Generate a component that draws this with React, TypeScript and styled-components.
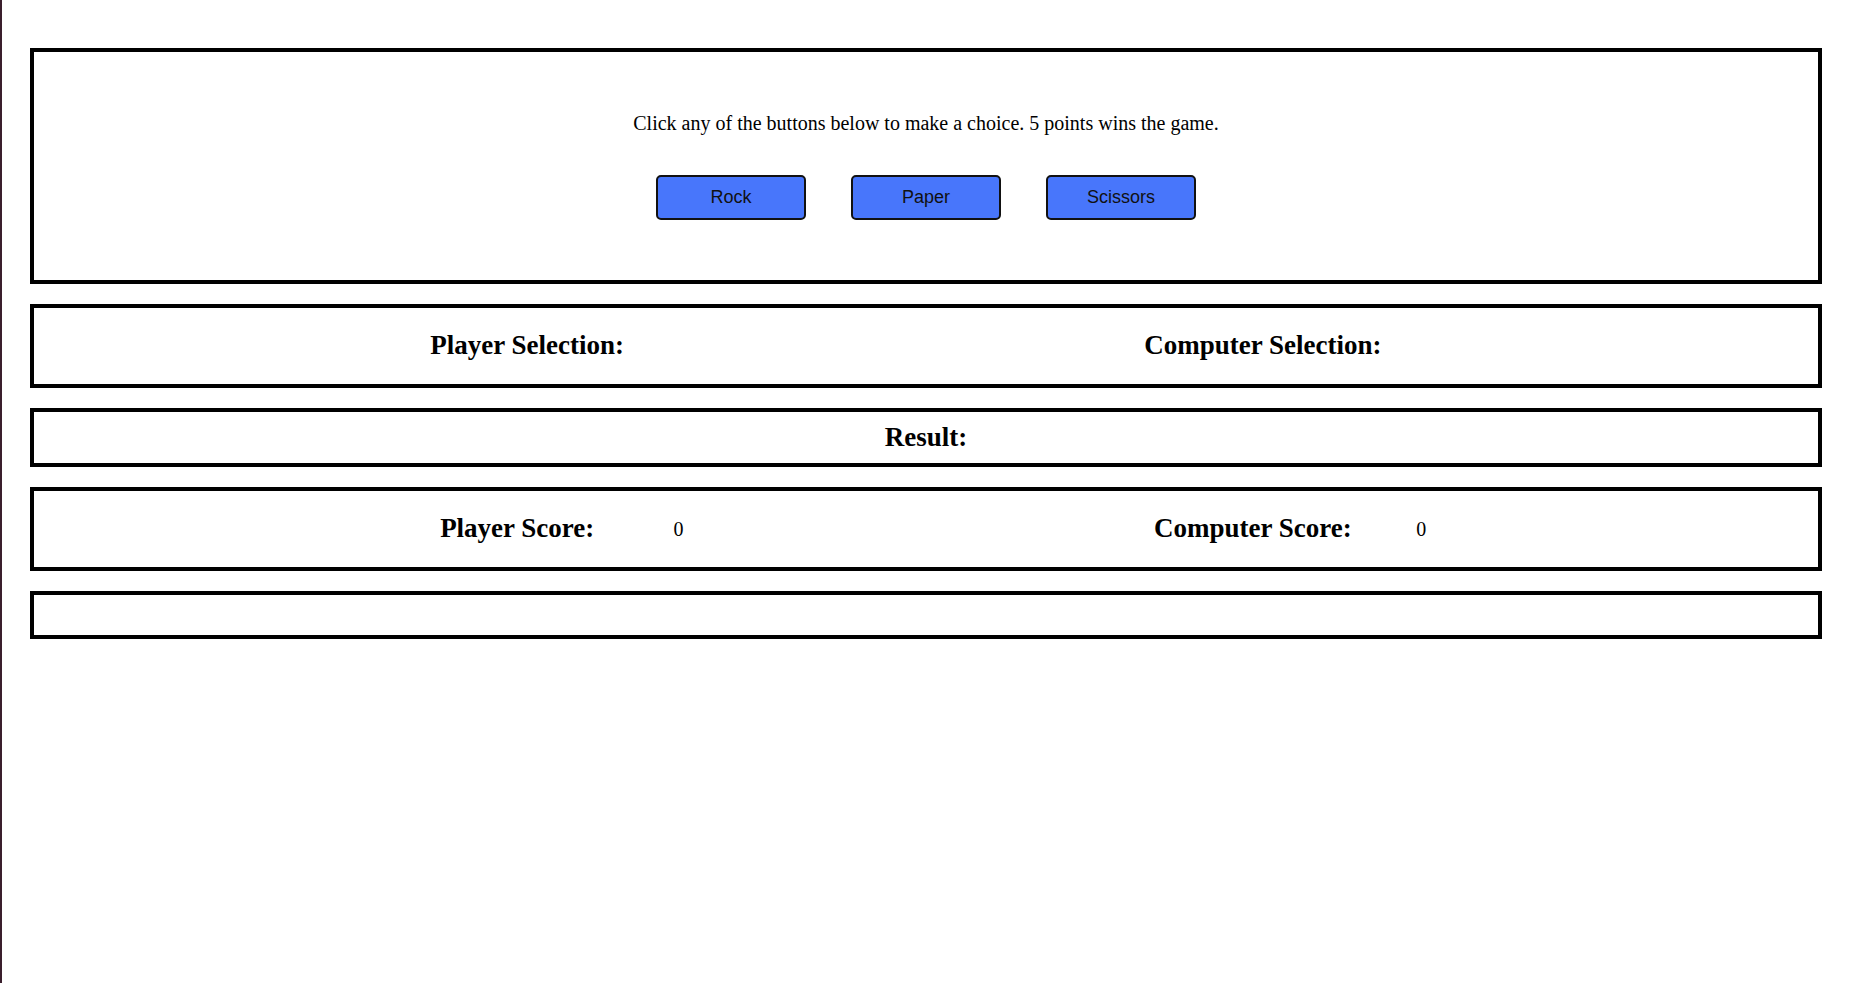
import styled, { createGlobalStyle } from "styled-components";
import { useState } from "react";

type Choice = "Rock" | "Paper" | "Scissors";

const choices: Choice[] = ["Rock", "Paper", "Scissors"];

const GlobalStyle = createGlobalStyle`
  html {
    min-height: 100%;
    border-left: 2px solid #3a1f2d;
    background: #ffffff;
  }
  body {
    margin: 0;
    font-family: "Liberation Serif", "Times New Roman", serif;
    color: #000;
  }
  * {
    box-sizing: border-box;
  }
`;

export default function App() {
  const [playerScore] = useState(0);
  const [computerScore] = useState(0);

  return (
    <>
      <GlobalStyle />
      <Page>
        <Intro>
          <Lead>
            Click any of the buttons below to make a choice. 5 points wins the
            game.
          </Lead>
          <Buttons>
            {choices.map((c) => (
              <ChoiceButton key={c}>{c}</ChoiceButton>
            ))}
          </Buttons>
        </Intro>

        <Panel $height={84}>
          <Row>
            <Group>
              <Label>Player Selection:</Label>
              <Value></Value>
            </Group>
            <Group>
              <Label>Computer Selection:</Label>
              <Value></Value>
            </Group>
          </Row>
        </Panel>

        <Panel $height={59}>
          <Label>Result:</Label>
        </Panel>

        <Panel $height={84}>
          <Row>
            <Group>
              <Label>Player Score:</Label>
              <Value>{playerScore}</Value>
            </Group>
            <Group>
              <Label>Computer Score:</Label>
              <Value>{computerScore}</Value>
            </Group>
          </Row>
        </Panel>

        <Panel $height={48} />
      </Page>
    </>
  );
}

const Page = styled.main`
  display: flex;
  flex-direction: column;
  gap: 20px;
  padding: 48px 28px;
`;

const Panel = styled.section<{ $height: number }>`
  height: ${(p) => p.$height}px;
  border: 4px solid #000;
  display: flex;
  align-items: center;
  justify-content: center;
`;

const Intro = styled(Panel).attrs({ $height: 236 })`
  flex-direction: column;
  justify-content: flex-start;
  padding-top: 60px;
`;

const Lead = styled.p`
  margin: 0;
  font-size: 20px;
  line-height: 23px;
`;

const Buttons = styled.div`
  display: flex;
  gap: 45px;
  margin-top: 40px;
`;

const ChoiceButton = styled.button`
  width: 150px;
  height: 45px;
  background-color: #4876fb;
  border: 2px solid #111;
  border-radius: 5px;
  font-family: "Liberation Sans", Arial, sans-serif;
  font-size: 18px;
  color: #111;
  cursor: pointer;
`;

const Row = styled.div`
  width: 100%;
  display: flex;
  justify-content: space-evenly;
  align-items: center;
`;

const Group = styled.div`
  width: 22.5%;
  display: flex;
  justify-content: space-evenly;
  align-items: center;
`;

const Label = styled.h2`
  margin: 0 0 2px;
  font-size: 27px;
  font-weight: 700;
  line-height: 30px;
`;

const Value = styled.span`
  font-size: 20px;
`;
